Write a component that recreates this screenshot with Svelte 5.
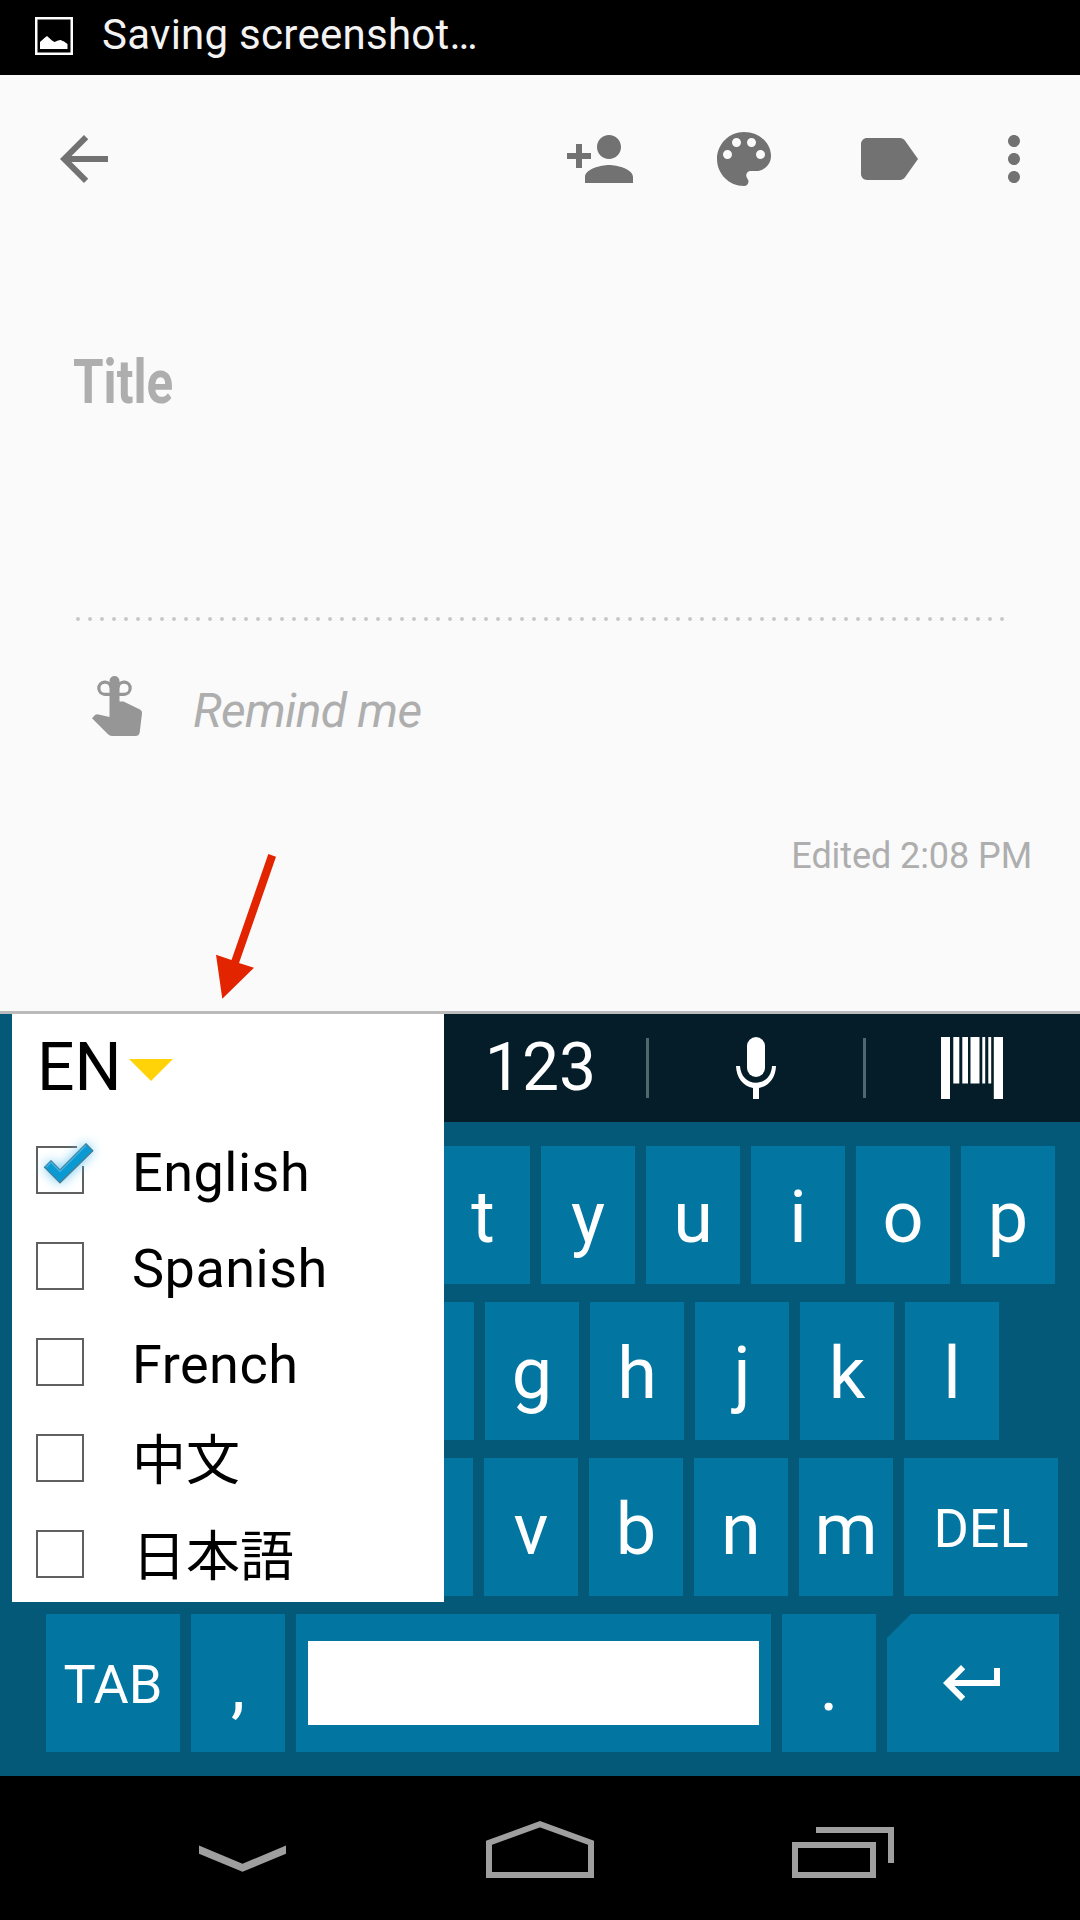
<script>
  const languages = [
    { label: 'English', checked: true },
    { label: 'Spanish', checked: false },
    { label: 'French', checked: false },
    { label: '中文', checked: false, cjk: true },
    { label: '日本語', checked: false, cjk: true }
  ];

  // An empty string is a key that lies under the language menu.
  const topRow = ['', '', '', '', 't', 'y', 'u', 'i', 'o', 'p'];
  const homeRow = ['', '', '', '', 'g', 'h', 'j', 'k', 'l'];
  const bottomRow = ['', '', '', 'v', 'b', 'n', 'm'];

  const icons = {
    back: 'M20 11H7.83l5.59-5.59L12 4l-8 8 8 8 1.41-1.41L7.83 13H20v-2z',
    addPerson:
      'M15 12c2.21 0 4-1.79 4-4s-1.79-4-4-4-4 1.79-4 4 1.79 4 4 4zm-9-2V7H4v3H1v2h3v3h2v-3h3v-2H6zm9 4c-2.67 0-8 1.34-8 4v2h16v-2c0-2.66-5.33-4-8-4z',
    palette:
      'M12 3c-4.97 0-9 4.03-9 9s4.03 9 9 9c.83 0 1.5-.67 1.5-1.5 0-.39-.15-.74-.39-1.01-.23-.26-.38-.61-.38-.99 0-.83.67-1.5 1.5-1.5H16c2.76 0 5-2.24 5-5 0-4.42-4.03-8-9-8zm-5.5 9c-.83 0-1.5-.67-1.5-1.5S5.67 9 6.5 9 8 9.67 8 10.5 7.33 12 6.5 12zm3-4C8.67 8 8 7.33 8 6.5S8.67 5 9.5 5s1.5.67 1.5 1.5S10.33 8 9.5 8zm5 0c-.83 0-1.5-.67-1.5-1.5S13.67 5 14.5 5s1.5.67 1.5 1.5S15.33 8 14.5 8zm3 4c-.83 0-1.5-.67-1.5-1.5S16.67 9 17.5 9s1.5.67 1.5 1.5-.67 1.5-1.5 1.5z',
    label:
      'M17.63 5.84C17.27 5.33 16.67 5 16 5L5 5.01C3.9 5.01 3 5.9 3 7v10c0 1.1.9 1.99 2 1.99L16 19c.67 0 1.27-.33 1.63-.84L22 12l-4.37-6.16z',
    more: 'M12 8c1.1 0 2-.9 2-2s-.9-2-2-2-2 .9-2 2 .9 2 2 2zm0 2c-1.1 0-2 .9-2 2s.9 2 2 2 2-.9 2-2-.9-2-2-2zm0 6c-1.1 0-2 .9-2 2s.9 2 2 2 2-.9 2-2-.9-2-2-2z',
    enter: 'M19 7v4H5.83l3.58-3.59L8 6l-6 6 6 6 1.41-1.41L5.83 13H21V7z'
  };
</script>

{#snippet icon(path)}
  <svg class="icon" viewBox="0 0 24 24"><path d={path} /></svg>
{/snippet}

<div class="screen">
  <header class="status">
    <svg class="picture" viewBox="0 0 38 38">
      <rect x="1.25" y="1.25" width="35.5" height="35.5" fill="none" stroke="#fff" stroke-width="2.5" />
      <path d="M5 32V25L10 20.5 12 19 17 23.5 19.5 25 23 23.5 25.5 23 29 24.5 32.5 27V32Z" fill="#fff" />
    </svg>
    <span class="status-text">Saving screenshot…</span>
  </header>

  <main class="note">
    <nav class="appbar">
      {@render icon(icons.back)}
      <div class="actions">
        {@render icon(icons.addPerson)}
        {@render icon(icons.palette)}
        {@render icon(icons.label)}
        <span class="overflow">{@render icon(icons.more)}</span>
      </div>
    </nav>

    <h1 class="title">Title</h1>

    <svg class="dots" viewBox="0 0 928 4">
      <line x1="2" y1="2" x2="927" y2="2" />
    </svg>

    <div class="reminder">
      <svg class="hand" viewBox="0 0 50 60">
        <path
          d="M17.5 41V5a5 5 0 0 1 10 0V25.5h4L48 33.500Q50.500 35 50 37.500L47.700 56.500Q47 60 43.500 60H20Q17.700 60 16 58.300L0 42.200 3 39Q4.500 38 6.500 38.400Z"
        />
        <path class="bow" d="M18 18.300H13A6.100 6.100 0 1 1 19 11.500M27 18.300H32A6.100 6.100 0 1 0 26 11.500" />
      </svg>
      <span>Remind me</span>
    </div>

    <p class="edited">Edited 2:08 PM</p>

    <svg class="pointer" viewBox="0 0 38 146">
      <path d="M52.300 0 60 2.700 23 109 38 113.700 6.300 144.700 0 100.700 15.500 106Z" />
    </svg>
  </main>

  <section class="keyboard">
    <div class="tools">
      <span class="tool numbers">123</span>
      <span class="tool">
        <svg class="mic" viewBox="0 0 42 62">
          <rect x="12" y="0" width="18" height="40" rx="9" />
          <path d="M1 29H5C5.500 39 12 45.700 21 45.700S36.500 39 37 29H41C40.500 41 34 49 24 51V62H18V51C8 49 1.500 41 1 29Z" />
        </svg>
      </span>
      <span class="tool">
        <svg class="barcode" viewBox="0 0 62 62">
          <path d="M0 0h9v62H0zM12.300 0h6v46.500h-6zM21.300 0h5.700v46.500h-5.700zM29.500 0h9v46.500h-9zM41.300 0h2.900v46.500h-2.900zM47.300 0h2.900v46.500h-2.900zM52.800 0H62v62h-9.200z" />
        </svg>
      </span>
    </div>

    <div class="rows">
      <div class="row top">
        {#each topRow as key}<span class="key">{key}</span>{/each}
      </div>
      <div class="row home">
        {#each homeRow as key}<span class="key">{key}</span>{/each}
      </div>
      <div class="row bottom">
        <span class="key shift"></span>
        {#each bottomRow as key}<span class="key">{key}</span>{/each}
        <span class="key word del">DEL</span>
      </div>
      <div class="row last">
        <span class="key word tab">TAB</span>
        <span class="key">,</span>
        <span class="key space"><i></i></span>
        <span class="key">.</span>
        <span class="key enter">{@render icon(icons.enter)}</span>
      </div>
    </div>

    <div class="menu">
      <div class="current">
        <span>EN</span>
        <svg class="caret" viewBox="0 0 44 22"><path d="M0 0H44L22 22Z" /></svg>
      </div>
      {#each languages as language}
        <div class="option">
          <svg class="check" viewBox="0 0 48 48">
            {#if language.checked}
              <path class="box" d="M41 1H1V47H47V20" />
              <path class="mark glow" d="M8 21.300 15 14.300 24 23.700 50 -2.700 57.300 4.700 24 37.300Z" />
              <path class="mark" d="M8.500 21.300 15 14.800 24 24 50 -2.200 56.800 4.700 24 36.800Z" />
              <path class="shine" d="M10 21.300 15 16.300 24 25.500 50 -.700" />
            {:else}
              <rect class="box" x="1" y="1" width="46" height="46" />
            {/if}
          </svg>
          <span class="name" class:cjk={language.cjk}>{language.label}</span>
        </div>
      {/each}
    </div>
  </section>

  <footer class="navbar">
    <svg viewBox="0 0 1080 144">
      <path d="M199 69.500 242.500 87.700 286 69.500V77.700L242.500 95.800 199 77.700Z" />
      <path class="line" d="M489 99V66.800L540 48.200 591 66.800V99Z" />
      <path class="line" d="M795 69H873V99H795ZM816 54H891V87" />
    </svg>
  </footer>
</div>

<style>
  :global(body) {
    margin: 0;
    background: #000;
  }

  .screen {
    display: flex;
    flex-direction: column;
    width: 1080px;
    height: 1920px;
    overflow: hidden;
    font-family: Roboto, 'Noto Sans CJK JP', sans-serif;
    background: #fafafa;
  }

  svg {
    display: block;
    flex: none;
    overflow: visible;
  }

  .status {
    display: flex;
    flex: none;
    gap: 29px;
    height: 75px;
    padding-left: 35px;
    box-sizing: border-box;
    background: #000;
  }

  .picture {
    width: 38px;
    height: 38px;
    margin-top: 17px;
  }

  .status-text {
    color: #f3f3f3;
    font-size: 42px;
    letter-spacing: 0.27px;
    line-height: 69px;
    white-space: nowrap;
  }

  .note {
    position: relative;
    flex: none;
    height: 936px;
    border-bottom: 3px solid #bbb;
    background: #fafafa;
  }

  .icon {
    width: 72px;
    height: 72px;
    fill: #727272;
  }

  .appbar {
    display: flex;
    justify-content: space-between;
    padding: 48px 30px 0 48px;
  }

  .actions {
    display: flex;
    gap: 72px;
  }

  .overflow {
    margin-left: -18px;
  }

  .title {
    width: max-content;
    margin: 151px 0 0 73px;
    color: #aeaeae;
    font-size: 61px;
    font-weight: 700;
    line-height: 73px;
    transform: scaleX(0.81);
    transform-origin: left;
  }

  .dots {
    width: 928px;
    height: 4px;
    margin: 198px 0 0 76px;
  }

  .dots line {
    stroke: #c8c8c8;
    stroke-width: 4;
    stroke-linecap: round;
    stroke-dasharray: 0 12;
  }

  .reminder {
    display: flex;
    gap: 51px;
    height: 60px;
    margin: 55px 0 0 92px;
    color: #aeaeae;
    font-size: 48px;
    font-style: italic;
    letter-spacing: -0.7px;
    line-height: 69px;
  }

  .hand {
    width: 50px;
    height: 60px;
    fill: #969696;
  }

  .hand .bow {
    fill: none;
    stroke: #969696;
    stroke-width: 3.2;
  }

  .edited {
    margin: 96px 48px 0 0;
    color: #aeaeae;
    font-size: 36px;
    letter-spacing: -0.08px;
    line-height: 48px;
    text-align: right;
  }

  .pointer {
    position: absolute;
    left: 216.3px;
    top: 779px;
    width: 38px;
    height: 146px;
    fill: #e32400;
  }

  .keyboard {
    position: relative;
    display: flex;
    flex: none;
    flex-direction: column;
    height: 762px;
    background: #045878;
  }

  .tools {
    display: grid;
    grid-template-columns: 217px 217px 214px;
    justify-content: end;
    height: 108px;
    margin-left: 12px;
    background: #041d28;
  }

  .tool {
    display: flex;
    align-items: center;
    justify-content: center;
    background: linear-gradient(#50676f, #50676f) no-repeat right 24px / 3px 60px;
    color: #fff;
    font-size: 66px;
    line-height: 107px;
  }

  .tool:last-child {
    background: none;
  }

  .numbers {
    align-items: flex-start;
  }

  .mic {
    width: 42px;
    height: 62px;
    margin-right: 3px;
    fill: #fff;
  }

  .barcode {
    width: 62px;
    height: 62px;
    margin-right: 2px;
    fill: #fff;
  }

  .rows {
    display: grid;
    grid-template-rows: repeat(4, 138px);
    gap: 18px;
    padding-top: 24px;
  }

  .row {
    display: flex;
    gap: 11px;
    padding-left: 16px;
  }

  .home {
    padding-left: 65px;
  }

  .last {
    padding-left: 46px;
  }

  .key {
    flex: none;
    width: 94px;
    height: 138px;
    background: #0276a0;
    color: #fff;
    font-size: 72px;
    line-height: 143px;
    text-align: center;
  }

  .word {
    font-size: 54px;
    line-height: 141px;
  }

  .shift {
    width: 142px;
  }

  .del {
    width: 154px;
  }

  .tab {
    width: 134px;
  }

  .space {
    box-sizing: border-box;
    width: 475px;
    padding: 27px 12px;
  }

  .space i {
    display: block;
    height: 84px;
    background: #fff;
  }

  .enter {
    display: flex;
    align-items: center;
    box-sizing: border-box;
    width: 172px;
    padding-left: 50px;
    clip-path: polygon(24px 0, 100% 0, 100% 100%, 0 100%, 0 24px);
  }

  .enter :global(.icon) {
    fill: #fff;
  }

  .menu {
    position: absolute;
    left: 12px;
    top: 0;
    width: 432px;
    height: 588px;
    background: #fff;
    color: #000;
  }

  .current {
    display: flex;
    align-items: flex-start;
    gap: 7px;
    height: 108px;
    padding-left: 25px;
    font-size: 66px;
    line-height: 107px;
  }

  .caret {
    width: 44px;
    height: 22px;
    margin-top: 45px;
    fill: #ffd307;
  }

  .option {
    display: flex;
    gap: 48px;
    height: 96px;
    padding-left: 24px;
    font-size: 54px;
    line-height: 101px;
  }

  .name {
    letter-spacing: 0.5px;
  }

  .cjk {
    font-weight: 400;
    letter-spacing: 0;
    line-height: 104px;
  }

  .check {
    width: 48px;
    height: 48px;
    margin-top: 24px;
  }

  .box {
    fill: none;
    stroke: #606060;
    stroke-width: 2;
  }

  .mark {
    fill: #0a9ad3;
    stroke: #4f7c92;
    stroke-width: 1.2;
  }

  .glow {
    stroke: none;
    filter: drop-shadow(0 0 6px #5fc4ee);
  }

  .shine {
    fill: none;
    stroke: #3fb0de;
    stroke-width: 1.5;
  }

  .navbar {
    flex: none;
    height: 144px;
    background: #000;
  }

  .navbar svg {
    width: 1080px;
    height: 144px;
    fill: #9f9f9f;
  }

  .navbar .line {
    fill: none;
    stroke: #9f9f9f;
    stroke-width: 6;
  }
</style>
